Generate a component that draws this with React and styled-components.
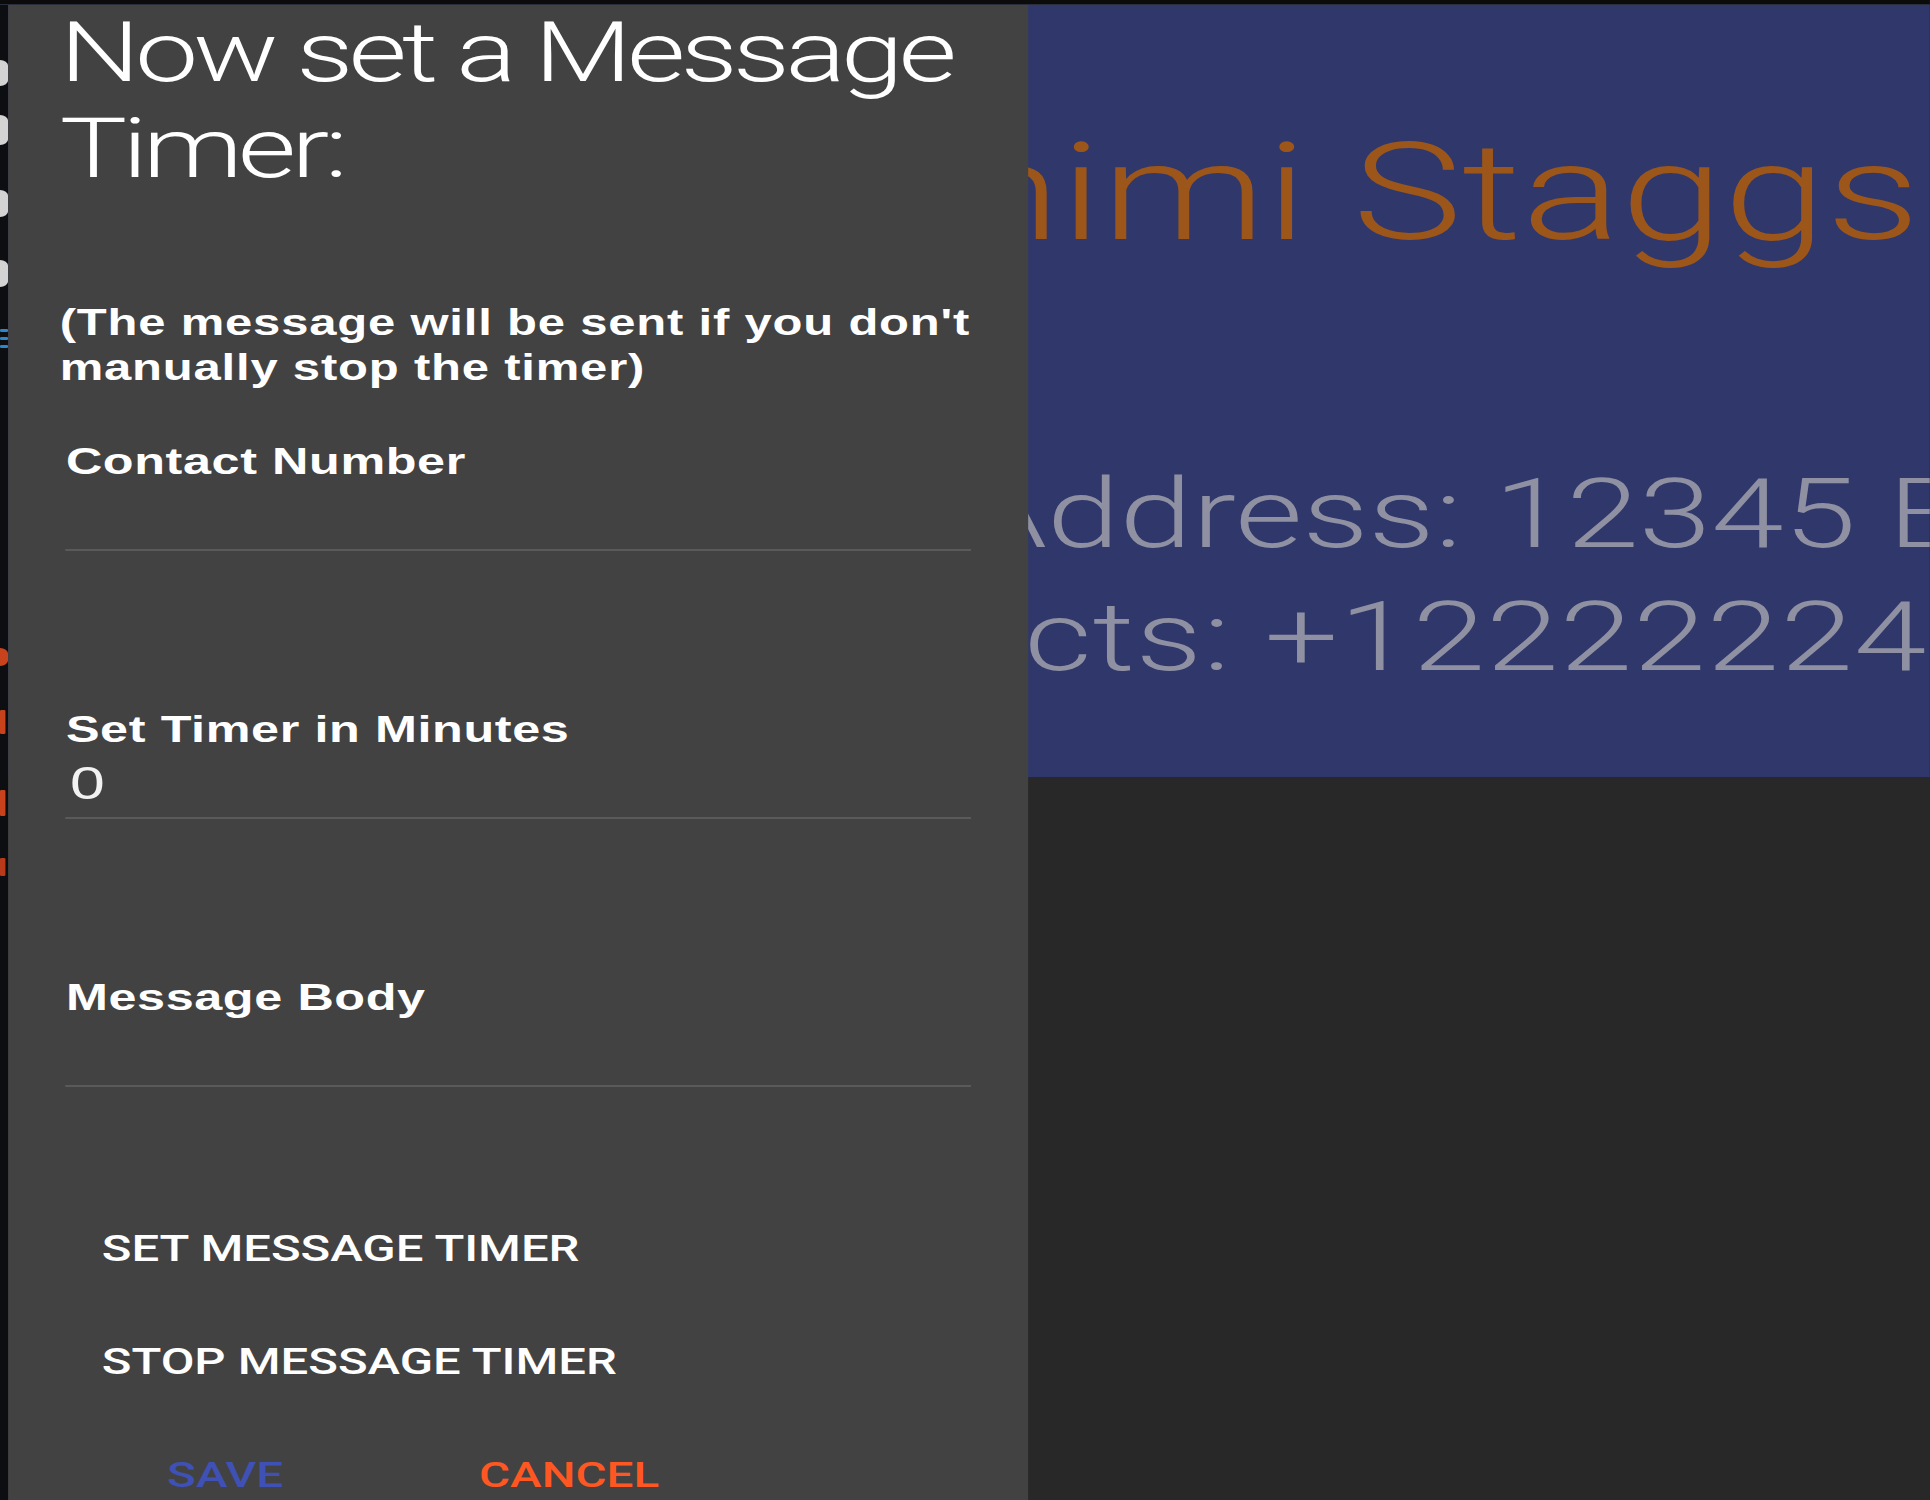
import React from "react";
import styled, { createGlobalStyle } from "styled-components";

const K = 1.36;

const Global = createGlobalStyle`
  html, body { margin: 0; padding: 0; background: #282828; overflow: hidden; }
  body { width: 1930px; height: 1500px; }
  #root { width: 1930px; height: 1500px; }
`;

const Stage = styled.div`
  position: relative;
  width: ${1930 / K}px;
  height: 1500px;
  transform: scaleX(${K});
  transform-origin: 0 0;
  display: flex;
  flex-direction: column;
  background: #282828;
  overflow: hidden;
`;

const TopBar = styled.div`
  height: 5px;
  flex: none;
  background: #0b0b0c;
  border-bottom: 1px solid #2a2d3a;
  box-sizing: border-box;
`;

const Body = styled.div`
  flex: 1;
  display: flex;
  min-height: 0;
`;

const Sidebar = styled.div`
  width: ${8 / K}px;
  flex: none;
  background: #0d0e12;
  display: flex;
  flex-direction: column;
`;

const SideMark = styled.div`
  margin-top: ${(p) => p.$gap}px;
  height: ${(p) => p.$h}px;
  width: ${(p) => p.$w || 8 / K}px;
  background: ${(p) => p.$c};
  border-radius: ${(p) => (p.$pill ? "0 6px 6px 0" : "1px")};
`;

const Main = styled.div`
  flex: 1;
  display: flex;
  flex-direction: column;
  min-width: 0;
`;

const ContactCard = styled.div`
  height: 772px;
  flex: none;
  background: #30386b;
  overflow: hidden;
  display: flex;
  flex-direction: column;
`;

const CardLine = styled.div`
  white-space: nowrap;
  padding-left: ${(p) => p.$lead}px;
  margin-top: ${(p) => p.$top || 0}px;
  font-family: Roboto, "Liberation Sans", sans-serif;
  font-weight: 300;
  font-size: ${(p) => p.$size}px;
  line-height: ${(p) => p.$lh}px;
  letter-spacing: ${(p) => p.$track || 0}px;
  color: ${(p) => p.$color};
`;

const Lower = styled.div`
  flex: 1;
  background: #282828;
`;

const Dialog = styled.div`
  position: absolute;
  top: 5px;
  left: ${8 / K}px;
  width: ${(1028 - 8) / K}px;
  bottom: 0;
  background: #424242;
  padding: 0 38px;
  box-sizing: border-box;
  display: flex;
  flex-direction: column;
  color: #ffffff;
`;

const Title = styled.h1`
  margin: 0;
  font-family: Roboto, "Liberation Sans", sans-serif;
  font-weight: 300;
  font-size: 83px;
  line-height: 96px;
  letter-spacing: -3.6px;
`;

const Notice = styled.p`
  margin: 103px 0 0;
  font-family: "Liberation Sans", Arial, sans-serif;
  font-weight: 700;
  font-size: 36px;
  line-height: 45px;
  letter-spacing: 0.6px;
`;

const Field = styled.div`
  margin: ${(p) => p.$top}px 4px 0 4.6px;
  display: flex;
  flex-direction: column;
`;

const Label = styled.label`
  font-family: "Liberation Sans", Arial, sans-serif;
  font-weight: 700;
  font-size: 37px;
  line-height: 44px;
  letter-spacing: 0.45px;
`;

const Input = styled.div`
  height: 63px;
  padding-bottom: 2px;
  border-bottom: 2px solid #5a5a5a;
  font-family: "Liberation Sans", Arial, sans-serif;
  font-weight: 400;
  font-size: 46px;
  line-height: 62px;
  padding-left: 3px;
  color: #f2f2f2;
`;

const Actions = styled.div`
  margin-top: 105px;
  padding-left: 31px;
  display: flex;
  flex-direction: column;
`;

const ActionButton = styled.button`
  all: unset;
  padding: 34.5px 0;
  font-family: Roboto, "Liberation Sans", sans-serif;
  font-weight: 500;
  font-size: 36px;
  line-height: 44px;
  text-transform: uppercase;
  color: #ffffff;
  align-self: flex-start;
`;

const Footer = styled.div`
  margin-top: 38px;
  padding-left: 79px;
  display: flex;
  gap: 144px;
`;

const FooterButton = styled.button`
  all: unset;
  font-family: Roboto, "Liberation Sans", sans-serif;
  font-weight: 500;
  font-size: 35px;
  line-height: 40px;
  color: ${(p) => p.$color};
`;

export default function App() {
  return (
    <>
      <Global />
      <Stage>
        <TopBar />
        <Body>
          <Sidebar>
            <SideMark $gap={55} $h={26} $c="#d3d3d3" $pill />
            <SideMark $gap={29} $h={30} $c="#d3d3d3" $pill />
            <SideMark $gap={45} $h={27} $c="#d3d3d3" $pill />
            <SideMark $gap={43} $h={27} $c="#d3d3d3" $pill />
            <SideMark $gap={42} $h={3} $c="#2c86c9" />
            <SideMark $gap={5} $h={3} $c="#2c86c9" />
            <SideMark $gap={5} $h={3} $c="#2c86c9" />
            <SideMark $gap={300} $h={18} $c="#c8431c" $pill />
            <SideMark $gap={44} $h={24} $c="#c8431c" $w={4} />
            <SideMark $gap={56} $h={26} $c="#c8431c" $w={4} />
            <SideMark $gap={42} $h={18} $c="#b83a1a" $w={4} />
          </Sidebar>
          <Main>
            <ContactCard>
              <CardLine $lead={699} $top={120} $size={136} $lh={136} $color="#9d5619">
                nimi Staggs
              </CardLine>
              <CardLine $lead={704} $top={192} $size={96} $lh={123} $color="#8f91a3">
                Address: 12345 Broadway Street
              </CardLine>
              <CardLine $lead={492} $size={96} $lh={123} $track={0.8} $color="#8f91a3">
                Contacts: +12222224444
              </CardLine>
            </ContactCard>
            <Lower />
          </Main>
        </Body>
        <Dialog>
          <Title>Now set a Message Timer:</Title>
          <Notice>
            (The message will be sent if you don't
            <br />
            manually stop the timer)
          </Notice>
          <Field $top={50}>
            <Label>Contact Number</Label>
            <Input />
          </Field>
          <Field $top={157}>
            <Label>Set Timer in Minutes</Label>
            <Input>0</Input>
          </Field>
          <Field $top={157}>
            <Label>Message Body</Label>
            <Input />
          </Field>
          <Actions>
            <ActionButton>Set Message Timer</ActionButton>
            <ActionButton>Stop Message Timer</ActionButton>
          </Actions>
          <Footer>
            <FooterButton $color="#3f51b5">SAVE</FooterButton>
            <FooterButton $color="#ff5722">CANCEL</FooterButton>
          </Footer>
        </Dialog>
      </Stage>
    </>
  );
}
